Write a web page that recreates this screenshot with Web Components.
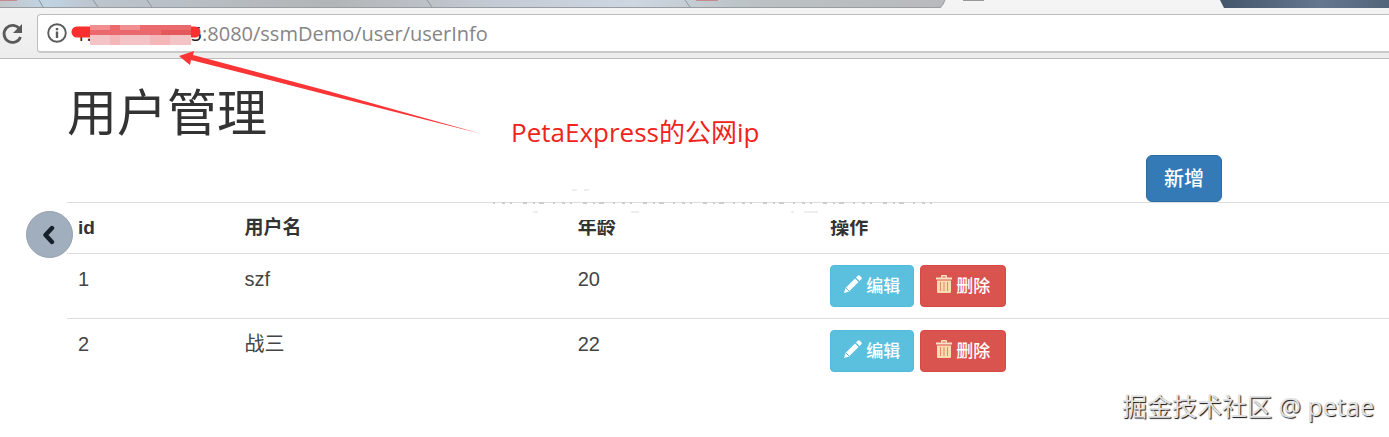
<!DOCTYPE html>
<html lang="zh-CN">
<head>
<meta charset="utf-8">
<title>用户管理</title>
<style>
  body {
    margin: 0;
    background: #fff;
    color: #333;
    font-family: "Liberation Sans", "Noto Sans CJK SC", sans-serif;
    overflow: hidden;
  }
</style>
</head>
<body>
<user-page>
  <browser-bar slot="browser" path=":8080/ssmDemo/user/userInfo"></browser-bar>
  <page-head slot="head" heading="用户管理">
    <action-button kind="primary">新增</action-button>
  </page-head>
  <user-table slot="table"></user-table>
  <red-note slot="overlay">PetaExpress的公网ip</red-note>
  <back-button slot="overlay"></back-button>
  <water-mark slot="overlay">掘金技术社区 @ petae</water-mark>
</user-page>

<script>
const attach = (el, html) => {
  const template = document.createElement("template");
  template.innerHTML = html;
  el.attachShadow({ mode: "open" });
  el.shadowRoot.appendChild(template.content.cloneNode(true));
};

const users = [
  { id: 1, name: "szf", age: 20 },
  { id: 2, name: "战三", age: 22 },
];

class UserPage extends HTMLElement {
  constructor() {
    super();
    attach(this, `
      <style>
        :host {
          display: flex;
          flex-direction: column;
          position: relative;
          min-height: 100vh;
        }
        main {
          padding-left: 67px;
        }
      </style>
      <slot name="browser"></slot>
      <main>
        <slot name="head"></slot>
        <slot name="table"></slot>
      </main>
      <slot name="overlay"></slot>
    `);
  }
}

class BrowserBar extends HTMLElement {
  constructor() {
    super();
    attach(this, `
      <style>
        :host {
          display: block;
          background: linear-gradient(#f4f4f4, #ededed);
          border-bottom: 1px solid #bdbdbd;
        }
        .tabs {
          display: block;
          width: 100%;
          height: 9px;
        }
        .bar {
          display: flex;
          align-items: center;
          padding: 5px 0;
        }
        button {
          display: flex;
          border: 0;
          padding: 0;
          background: none;
        }
        .reload {
          width: 37px;
        }
        .address {
          flex: 1;
          display: flex;
          align-items: center;
          height: 36px;
          border: 1px solid #bcbcbc;
          border-right: 0;
          border-bottom: 2px solid #cacaca;
          border-radius: 4px 0 0 4px;
          background: #fff;
          padding-left: 9px;
          font-family: "Open Sans", "Noto Sans", sans-serif;
          font-size: 20px;
        }
        .host {
          position: relative;
          display: flex;
          justify-content: space-between;
          box-sizing: border-box;
          width: 131px;
          margin-left: 4px;
          padding-left: 4px;
          color: #222;
        }
        .host svg {
          position: absolute;
          left: 0;
          top: 0;
        }
        input {
          flex: 1;
          min-width: 0;
          border: 0;
          padding: 0;
          outline: 0;
          background: none;
          color: #858585;
          font: inherit;
        }
      </style>
      <svg class="tabs" viewBox="0 0 1389 9" preserveAspectRatio="none" aria-hidden="true">
        <defs>
          <linearGradient id="glass">
            <stop offset="0" stop-color="#c3c6c9"/>
            <stop offset=".05" stop-color="#c0d4e4"/>
            <stop offset=".1" stop-color="#bcc4cd"/>
            <stop offset=".35" stop-color="#b2b5b7"/>
            <stop offset=".53" stop-color="#c5cbd5"/>
            <stop offset=".67" stop-color="#ccd7e1"/>
            <stop offset=".8" stop-color="#bbc1c4"/>
            <stop offset="1" stop-color="#b8babb"/>
          </linearGradient>
          <linearGradient id="frame">
            <stop offset="0" stop-color="#44566b"/>
            <stop offset=".6" stop-color="#65778f"/>
            <stop offset="1" stop-color="#52647a"/>
          </linearGradient>
        </defs>
        <path d="M0 0H945L941 8H0z" fill="url(#glass)"/>
        <path d="M1220 0H1389V8H1224z" fill="url(#frame)"/>
        <path d="M0 7.500H940Q943 6 945 0" fill="none" stroke="#999da1"/>
        <path d="M39 0l4 7M93 0l5 7M147 0l5 7M427 0l5 7M685 0l5 7" fill="none" stroke="#8e959d"/>
        <path d="M0 0h17M696 0h22" stroke="#c58b90" stroke-width="2"/>
        <path d="M963 0h21" stroke="#999" stroke-width="2"/>
      </svg>
      <div class="bar">
        <button class="reload" aria-label="重新加载">
          <svg width="24" height="24" viewBox="0 0 24 24">
            <path d="M19.500 7A8.500 8.500 0 1 0 20.500 15" fill="none" stroke="#5a5a5a" stroke-width="2.800"/>
            <path d="M22 2v9h-9z" fill="#5a5a5a"/>
          </svg>
        </button>
        <div class="address">
          <button aria-label="网站信息">
            <svg width="20" height="20" viewBox="0 0 20 20">
              <circle cx="10" cy="10" r="8.800" fill="none" stroke="#5c5c5c" stroke-width="1.900"/>
              <path d="M10 8.500v6.500M10 5v2.200" stroke="#5c5c5c" stroke-width="2.400"/>
            </svg>
          </button>
          <span class="host">
            <span>1.</span><span>5</span>
            <svg width="134" height="28" viewBox="0 0 134 28" aria-hidden="true">
              <path d="M6 12H124" stroke="#fa2f2f" stroke-width="11" stroke-linecap="round"/>
              <path d="M19 5h101v10H19z" fill="#ea696c"/>
              <path d="M19 15h101v10H19z" fill="#f3c3c5"/>
              <path d="M19 5h20v5H19zM49 5h20v5H49z" fill="#f28e90"/>
              <path d="M90 10h30v5H90z" fill="#e4575a"/>
              <path d="M39 15h10v10H39zM79 15h20v10H79z" fill="#f5b6b8"/>
            </svg>
          </span>
          <input aria-label="地址" spellcheck="false">
        </div>
      </div>
    `);
    this.shadowRoot.querySelector("input").value = this.getAttribute("path");
  }
}

class PageHead extends HTMLElement {
  constructor() {
    super();
    attach(this, `
      <style>
        :host {
          display: flex;
          flex-direction: column;
          padding-top: 27px;
        }
        h1 {
          margin: 0 0 13px;
          font-size: 50px;
          line-height: 56px;
          font-weight: 400;
        }
        .tools {
          display: flex;
          justify-content: flex-end;
          margin-right: 167px;
        }
      </style>
      <h1></h1>
      <div class="tools"><slot></slot></div>
    `);
    this.shadowRoot.querySelector("h1").textContent = this.getAttribute("heading");
  }
}

const icons = {
  info: `<svg width="18" height="18" viewBox="0 0 18 18" aria-hidden="true">
    <path d="M0 18l1.500-5L11 3.500l3.500 3.500L5 16.500zM12 2.500l2-2q.8-.6 1.500 0l2 2q.6.8 0 1.500l-2 2z" fill="#fff"/>
    <path d="M2 13l3 3" stroke="#5bc0de"/>
  </svg>`,
  danger: `<svg width="16" height="18" viewBox="0 0 16 18" aria-hidden="true">
    <path d="M0 4.500V2.500h5V1q0-1 1-1h4q1 0 1 1v1.500h5v2zM6.500 1.500v1h3v-1z" fill="#fbe3c4" fill-rule="evenodd"/>
    <path d="M1 5.500h14V17q0 1-1 1H2q-1 0-1-1z" fill="#fbdcae"/>
    <path d="M4.500 7v9M8 7v9M11.500 7v9" stroke="#e08a68"/>
  </svg>`,
};

class ActionButton extends HTMLElement {
  constructor() {
    super();
    const kind = this.getAttribute("kind");
    attach(this, `
      <style>
        :host {
          display: block;
        }
        button {
          display: flex;
          align-items: center;
          gap: 4px;
          border: 1px solid;
          border-radius: 4px;
          padding: 0 13px 4px;
          height: 42px;
          color: #fff;
          font-family: inherit;
          font-size: 17px;
          font-weight: 500;
          cursor: pointer;
        }
        .primary {
          height: 47px;
          padding: 0 17px 2px;
          border-radius: 6px;
          font-size: 20px;
          background: #337ab7;
          border-color: #2e6da4;
        }
        .info {
          background: #5bc0de;
          border-color: #50bcdc;
        }
        .danger {
          padding: 0 15px 4px;
          background: #d9534f;
          border-color: #d64945;
        }
      </style>
      <button class="${kind}">${icons[kind] || ""}<slot></slot></button>
    `);
  }
}

class UserTable extends HTMLElement {
  constructor() {
    super();
    attach(this, `
      <style>
        :host {
          display: block;
          position: relative;
        }
        table {
          width: 100%;
          table-layout: fixed;
          border-collapse: separate;
          border-spacing: 0;
          font-size: 20px;
          line-height: 28px;
        }
        .id { width: 12.6%; }
        .name { width: 25.2%; }
        .age { width: 19.1%; }
        th, td {
          padding: 11px;
          border-top: 1px solid #ddd;
          text-align: left;
          vertical-align: top;
        }
        th {
          font-size: 19px;
        }
        td {
          color: #444;
        }
        .actions {
          display: flex;
          gap: 6px;
        }
        .specks {
          position: absolute;
          left: 32%;
          top: -14px;
        }
      </style>
      <table>
        <colgroup><col class="id"><col class="name"><col class="age"><col></colgroup>
        <thead>
          <tr><th>id</th><th>用户名</th><th>年龄</th><th>操作</th></tr>
        </thead>
        <tbody></tbody>
      </table>
      <svg class="specks" width="450" height="34" aria-hidden="true">
        <path d="M0 16h450v16H0z" fill="#fff"/>
        <path d="M3 15H446" stroke="#ccc" stroke-width="2" stroke-dasharray="2 7 3 5 2 11 4 6 2 4 5 9"/>
        <path d="M43 24h5M141 24h8M301 24h3M314 24h14M82 2h5M94 2h5" stroke="#ddd"/>
      </svg>
    `);
    const tbody = this.shadowRoot.querySelector("tbody");
    users.forEach((user) => {
      const tr = document.createElement("tr");
      tr.innerHTML = `
        <td>${user.id}</td>
        <td>${user.name}</td>
        <td>${user.age}</td>
        <td><div class="actions">
          <action-button kind="info">编辑</action-button>
          <action-button kind="danger">删除</action-button>
        </div></td>`;
      tbody.appendChild(tr);
    });
  }
}

// Arrow and label pointing at the address
class RedNote extends HTMLElement {
  constructor() {
    super();
    attach(this, `
      <style>
        :host {
          position: absolute;
          left: 178px;
          top: 48px;
          display: flex;
          align-items: flex-end;
          gap: 29px;
          color: #f0231b;
          font-family: "Open Sans", "Noto Sans CJK SC", sans-serif;
          font-size: 26px;
          line-height: 36px;
          pointer-events: none;
        }
        span {
          margin-bottom: -14px;
        }
      </style>
      <svg width="304" height="88" viewBox="0 0 304 88" aria-hidden="true">
        <path d="M1 8L16 3 15 7 150 43 304 86 150 47 13 12 12 17z" fill="#fb3535"/>
      </svg>
      <span><slot></slot></span>
    `);
  }
}

class BackButton extends HTMLElement {
  constructor() {
    super();
    attach(this, `
      <style>
        :host {
          position: absolute;
          left: 26px;
          top: 211px;
        }
        button {
          display: flex;
          align-items: center;
          justify-content: center;
          width: 47px;
          height: 47px;
          border: 1px solid #94a0ae;
          border-radius: 50%;
          padding: 0;
          background: #a0aebd;
        }
      </style>
      <button aria-label="返回">
        <svg width="14" height="20" viewBox="0 0 14 20">
          <path d="M9 3L2.500 10 9 17" fill="none" stroke="#14202b" stroke-width="4.400" stroke-linecap="round" stroke-linejoin="round"/>
        </svg>
      </button>
    `);
  }
}

class WaterMark extends HTMLElement {
  constructor() {
    super();
    attach(this, `
      <style>
        :host {
          position: absolute;
          right: 15px;
          bottom: 13px;
          color: #e2e2e2;
          font-family: "Noto Sans", "Noto Sans CJK SC", sans-serif;
          font-size: 25px;
          line-height: 36px;
          text-shadow: 1px 1px 1px #111;
        }
      </style>
      <slot></slot>
    `);
  }
}

customElements.define("user-page", UserPage);
customElements.define("browser-bar", BrowserBar);
customElements.define("page-head", PageHead);
customElements.define("action-button", ActionButton);
customElements.define("user-table", UserTable);
customElements.define("red-note", RedNote);
customElements.define("back-button", BackButton);
customElements.define("water-mark", WaterMark);
</script>
</body>
</html>
